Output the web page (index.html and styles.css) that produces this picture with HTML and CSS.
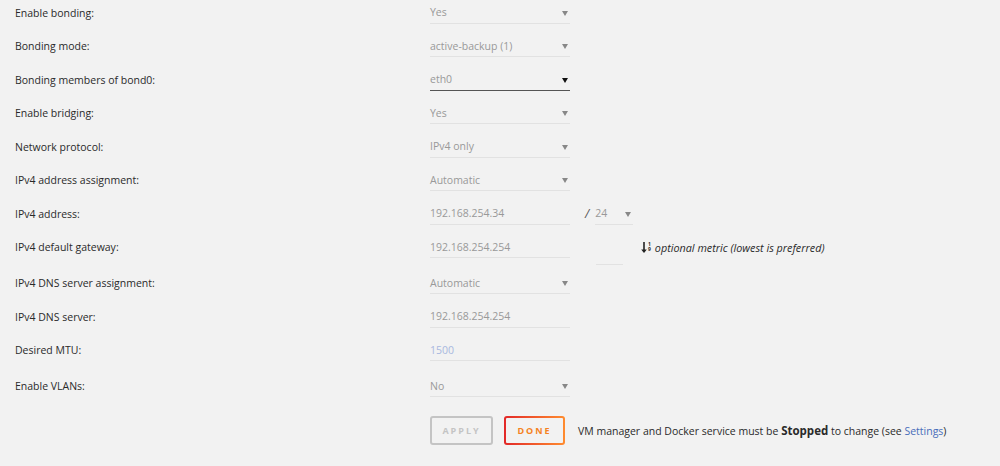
FILE: index.html
```html
<!DOCTYPE html>
<html>
<head>
    <title>Network Settings</title>
    <link rel="stylesheet" href="styles.css">
</head>
<body>
    <div class="form">
        <div class="row">
            <span class="label">Enable bonding:</span>
            <div class="field select"><span>Yes</span><i class="caret"></i></div>
        </div>
        <div class="row">
            <span class="label">Bonding mode:</span>
            <div class="field select"><span>active-backup (1)</span><i class="caret"></i></div>
        </div>
        <div class="row">
            <span class="label">Bonding members of bond0:</span>
            <div class="field select active"><span>eth0</span><i class="caret"></i></div>
        </div>
        <div class="row">
            <span class="label">Enable bridging:</span>
            <div class="field select"><span>Yes</span><i class="caret"></i></div>
        </div>
        <div class="row">
            <span class="label">Network protocol:</span>
            <div class="field select"><span>IPv4 only</span><i class="caret"></i></div>
        </div>
        <div class="row">
            <span class="label">IPv4 address assignment:</span>
            <div class="field select"><span>Automatic</span><i class="caret"></i></div>
        </div>
        <div class="row">
            <span class="label">IPv4 address:</span>
            <div class="field"><span>192.168.254.34</span></div>
            <span class="slash">/</span>
            <div class="field select mask"><span>24</span><i class="caret"></i></div>
        </div>
        <div class="row tall">
            <span class="label">IPv4 default gateway:</span>
            <div class="field"><span>192.168.254.254</span></div>
            <div class="field metric"></div>
            <span class="hint">
                <span class="sort-icon">
                    <svg width="6" height="11" viewBox="0 0 6 11"><path d="M3 0v8.5" stroke="#222" stroke-width="1.6"/><path d="M0.2 7.5h5.6L3 11z" fill="#222"/></svg>
                    <span class="digits"><span>1</span><span>9</span></span>
                </span>
                <em>optional metric (lowest is preferred)</em>
            </span>
        </div>
        <div class="row">
            <span class="label">IPv4 DNS server assignment:</span>
            <div class="field select"><span>Automatic</span><i class="caret"></i></div>
        </div>
        <div class="row">
            <span class="label">IPv4 DNS server:</span>
            <div class="field"><span>192.168.254.254</span></div>
        </div>
        <div class="row">
            <span class="label">Desired MTU:</span>
            <div class="field"><span class="placeholder">1500</span></div>
        </div>
        <div class="row last">
            <span class="label">Enable VLANs:</span>
            <div class="field select"><span>No</span><i class="caret"></i></div>
        </div>
        <div class="actions">
            <button class="btn apply">Apply</button>
            <button class="btn done">Done</button>
            <span class="note">VM manager and Docker service must be <b>Stopped</b> to change (see <a href="#">Settings</a>)</span>
        </div>
    </div>
</body>
</html>
```

FILE: styles.css
```css
body { margin: 0; background: #f2f2f2; font-family: "Open Sans", "Noto Sans", sans-serif; font-size: 10.5px; color: #2a2a2a; }
.form { margin-top: -4px; }
.row { display: flex; align-items: center; height: 33.5px; }
.row.tall { height: 33.5px; margin-bottom: 2.5px; }
.row.last { margin-top: 2.5px; }
.label { width: 430px; padding-left: 15px; box-sizing: border-box; }
.field { position: relative; display: flex; align-items: center; width: 140px; height: 22px; border-bottom: 1px solid #e2e2e2; color: #999; box-sizing: border-box; }
.field.active { border-bottom-color: #555; }
.field.active .caret { border-top-color: #111; }
.caret { position: absolute; right: 2px; top: 9px; border-left: 3px solid transparent; border-right: 3px solid transparent; border-top: 5px solid #888; }
.slash { margin-left: 15px; margin-right: 6px; color: #555; font-style: italic; font-size: 12px; }
.field.mask { width: 38px; }
.field.metric { width: 27px; margin-left: 26px; margin-top: 14px; }
.placeholder { color: #a8b8e0; }
.hint { display: flex; align-items: center; margin-left: 18px; color: #2a2a2a; }
.hint em { font-size: 10.8px; }
.sort-icon { display: flex; align-items: center; margin-right: 4px; }
.digits { display: flex; flex-direction: column; font-size: 5px; line-height: 5px; font-weight: bold; margin-left: 1px; }
.actions { display: flex; align-items: center; padding-left: 430px; margin-top: 13px; }
.btn { height: 29px; border-radius: 3px; background: transparent; font-family: inherit; font-size: 9px; font-weight: bold; letter-spacing: 2px; text-transform: uppercase; box-sizing: border-box; }
.apply { width: 63px; border: 2px solid #c4c4c4; color: #c4c4c4; }
.done { width: 61px; margin-left: 11px; border: 2px solid transparent; color: #f5831f;
    background: linear-gradient(#f2f2f2, #f2f2f2) padding-box, linear-gradient(90deg, #e22828, #ff8c2f) border-box; }
.note { margin-left: 13px; color: #2a2a2a; }
.note b { font-size: 11.5px; }
.note a { color: #486dba; text-decoration: none; }
```
